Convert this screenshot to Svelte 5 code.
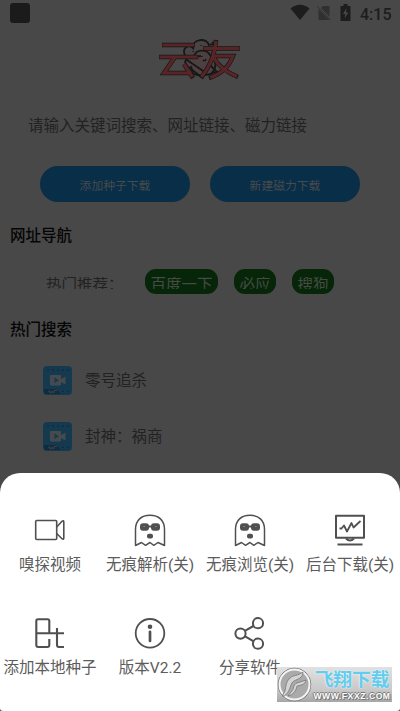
<script>
  const movies = ['零号追杀', '封神：祸商'];
  const sites = [
    { name: '百度一下', width: 73 },
    { name: '必应', width: 42 },
    { name: '搜狗', width: 42 }
  ];
  const actions = [
    { icon: 'video', label: '嗅探视频' },
    { icon: 'ghost', label: '无痕解析(关)' },
    { icon: 'ghost', label: '无痕浏览(关)' },
    { icon: 'monitor', label: '后台下载(关)' },
    { icon: 'bt', label: '添加本地种子' },
    { icon: 'info', label: '版本V2.2' },
    { icon: 'share', label: '分享软件' }
  ];
</script>

<div class="screen">
  <header class="status">
    <span class="square"></span>
    <div class="indicators">
      <svg width="20" height="17" viewBox="0 0 20 17"><path d="M0.5 4.5Q10-3 19.5 4.5L10 16Z" fill="#1d1d1d" /></svg>
      <svg class="sim" width="14" height="16" viewBox="0 0 14 16"><path d="M4 3L6 1H12.5V11.5Z M1.5 4L12.5 15H1.5Z" fill="#303030" /><path d="M0.5 1.5L13.5 15" stroke="#303030" stroke-width="1" /></svg>
      <svg class="battery" width="11" height="17" viewBox="0 0 11 17"><path d="M3.5 0H7.5V2H10.5V17H0.5V2H3.5Z" fill="#1d1d1d" /><path d="M6.5 4L3 10H5.3L4.6 14.5L8.3 8.5H6Z" fill="#484848" /></svg>
      <span class="clock">4:15</span>
    </div>
  </header>

  <div class="brand">
    <svg width="84" height="44" viewBox="0 0 84 44" fill="none" stroke-linecap="butt" stroke-linejoin="miter">
      <g stroke="#171717" stroke-width="1.8">
        <path fill="#484445" d="M28 20C22 11 31 7 35 11C34 2 49 0 51 8C57 6 60 10 55 17L44 25Z" />
        <path fill="#4c4041" d="M27 25C30 18 35 19 36 19C38 12 49 12 52 18C59 24 59 31 53 37L42 39L29 29Z" />
        <path d="M29 23L48 36M33 29L35 37L44 39M52 28L59 35L53 36M36 20L43 19M54 5L60 12" />
      </g>
      <g stroke="#191516" stroke-width="4.6">
        <path d="M4 8H37M1 20H40M17 20L6 36H33M26 27L35 41M45 11.5H82M58 3C56 21 51 30 43 41M54 19H75C71 30 63 37 51 41M56 21C61 30 68 35 80 40" />
      </g>
      <g stroke="#582527" stroke-width="3.2">
        <path d="M4.5 8H36.5M1.5 20H39.5M17 20L6 36H33M26 27L34.5 40M45.5 11.5H81.5M58 4C56 21 51 30 43.5 40M54 19H75C71 30 63 37 52 40.5M56 21C61 30 68 35 79 39.5" />
      </g>
      <path d="M35 14V15M43 8V9M44 19V20M45 23Q47 25 48 22" stroke="#111" stroke-width="1.3" />
    </svg>
  </div>

  <p class="hint">请输入关键词搜索、网址链接、磁力链接</p>
  <div class="buttons">
    <div class="button"><span>添加种子下载</span></div>
    <div class="button"><span>新建磁力下载</span></div>
  </div>
  <h2>网址导航</h2>
  <div class="sites">
    <span class="lead">热门推荐：</span>
    {#each sites as site}
      <div class="site" style:width="{site.width}px"><span>{site.name}</span></div>
    {/each}
  </div>
  <h2 class="hot">热门搜索</h2>
  <div class="movies">
    {#each movies as title}
      <div class="movie">
        <svg width="29" height="29" viewBox="0 0 29 29">
          <rect width="29" height="29" rx="4" fill="#153a50" />
          <path d="M4 4H26M4 25.5H26" stroke="#102d40" stroke-width="1.6" stroke-dasharray="2 3" />
          <path d="M1 23H13L18 28H4Q1 28 1 25Z" fill="#102b3b" />
          <path d="M5 26L7 24.5V27H9V25L11 27V24.5H14" stroke="#38424a" fill="none" />
          <path d="M8 9H17Q18 9 18 10V13L22.5 10.5V18.5L18 16V18.5Q18 19.5 17 19.5H8Q7 19.5 7 18.5V10Q7 9 8 9Z" fill="#474a4c" />
          <path d="M11.5 11.5L16 14.2L11.5 17Z" fill="#153a50" />
        </svg>
        <span>{title}</span>
      </div>
    {/each}
  </div>

  <section class="sheet">
    <div class="actions">
      {#each actions as action}
        <div class="action">
          <svg width="34" height="34" viewBox="0 0 34 34" fill="none" stroke="#505050" stroke-width="1.6" stroke-linejoin="round">
            {#if action.icon === 'video'}
              <rect x="2.7" y="7.5" width="21" height="19" rx="1" />
              <path d="M23.7 14L29 8.3Q30.8 7 30.8 9V25Q30.8 27 29 25.7L23.7 20.5" />
            {:else if action.icon === 'ghost'}
              <path d="M2.5 32.5V16.5C2.5 7 8.5 2.3 17 2.3S31.5 7 31.5 16.5V32.5L25 29.5L20.8 32.3L17 29.5L12.5 32.3L8.5 29.5Z" stroke-width="1.5" />
              <rect x="7" y="10.3" width="9" height="7.4" rx="3" fill="#505050" stroke="none" />
              <rect x="18" y="10.3" width="9" height="7.4" rx="3" fill="#505050" stroke="none" />
              <path d="M14 13.5H20" stroke-width="2" />
              <path d="M10.5 13.5H12M22 13.5H23.5" stroke="#858585" stroke-width="1.2" />
              <rect x="14" y="20.7" width="6" height="4.7" rx="2" fill="#505050" stroke="none" />
            {:else if action.icon === 'monitor'}
              <rect x="3" y="2.8" width="28" height="22" stroke-width="2" />
              <path d="M6.5 15.5H8.5L11 12.5L14 18.5L18.5 10L20.5 14.5L27.5 8" stroke-width="1.8" />
              <path d="M13 25.5Q17 29.5 21 25.5M4.5 31.5H29.5" stroke-width="2" />
            {:else if action.icon === 'bt'}
              <path d="M3.3 17.3V5Q3.3 3.2 5 3.2H14.5Q16.3 3.2 16.3 5V17M3.3 17.3V29Q3.3 31 5.3 31H14.3Q16.3 31 16.3 29V23M3.3 17.3H31M24 12V29Q24 31 26 31H31" stroke-width="2.1" />
            {:else if action.icon === 'info'}
              <circle cx="17" cy="17.3" r="14.3" stroke-width="1.8" />
              <circle cx="17" cy="10.8" r="2.3" fill="#505050" stroke="none" />
              <path d="M17 15.8V25" stroke-width="2.7" stroke-linecap="round" />
            {:else}
              <path d="M12.3 14.7L20.5 10M12.1 20.3L20.7 25.3" stroke-width="2.1" />
              <circle cx="7.5" cy="17.6" r="5.1" stroke-width="2" />
              <circle cx="25" cy="7.2" r="5.1" stroke-width="2" />
              <circle cx="25" cy="27.7" r="5.1" stroke-width="2" />
            {/if}
          </svg>
          <span>{action.label}</span>
        </div>
      {/each}
    </div>
  </section>

  <div class="watermark">
    <svg width="35" height="35" viewBox="0 0 35 35">
      <circle cx="17.5" cy="17.5" r="16.3" fill="#999" stroke="#6d6d6d" />
      <circle cx="17.5" cy="17.5" r="15" fill="#aaa" stroke="#f5f5f5" stroke-width="2" />
      <path d="M6 27C10 24 7 16 13 11C16 8 21 9 26 5C26 11 21 12 17 14C12 17 15 24 6 30ZM14 25C18 22 15 18 20 16L29 13C28 18 24 18 20 19C19 24 16 28 11 29Z" fill="#d4d4d4" stroke="#777" stroke-width=".8" />
    </svg>
    <div class="wm-copy"><b>飞翔下载</b><strong>WWW.FXXZ.COM</strong></div>
  </div>
</div>

<style>
  :global(body) { background: #484848; }
  .screen {
    position: relative;
    display: flex;
    flex-direction: column;
    width: 400px;
    height: 711px;
    overflow: hidden;
    background: #484848;
    color: #202020;
    font-family: Roboto, "Noto Sans CJK SC", sans-serif;
    box-sizing: border-box;
  }
  .status { height: 28px; display: flex; justify-content: space-between; padding: 0 9px 0 10px; flex: none; }
  .square { width: 20px; height: 20px; margin-top: 3px; border-radius: 3px; background: #1b1b1b; }
  .indicators { display: flex; align-items: flex-start; padding-top: 4px; }
  .sim { margin: 1px 0 0 7px; }
  .battery { margin-left: 9px; }
  .clock { width: 31px; margin-left: 9px; font-size: 16px; line-height: 21px; font-weight: 500; color: #1d1d1d; }
  .brand { height: 44px; display: flex; justify-content: center; margin-top: 9px; flex: none; }
  .hint { margin: 33px 0 0 28px; height: 24px; font-size: 15.5px; line-height: 24px; white-space: nowrap; color: #222; flex: none; }
  .buttons { display: flex; gap: 20px; margin: 28px 0 0 40px; flex: none; }
  .button { width: 150px; height: 36px; border-radius: 18px; background: #092e47; color: #474b4e; text-align: center; }
  .button span { display: block; overflow: hidden; height: 12px; margin-top: 12.5px; font-size: 11.8px; line-height: 14px; }
  h2 { margin: 21px 0 0 10px; height: 26px; font-size: 15.5px; line-height: 26px; font-weight: 500; color: #050505; flex: none; }
  .sites { display: flex; height: 25px; margin: 20px 0 0 46px; flex: none; }
  .lead { width: 83px; margin: 7.5px 16px 0 0; height: 12.5px; overflow: hidden; font-size: 15.5px; line-height: 16px; white-space: nowrap; color: #222; }
  .site { height: 25px; border-radius: 11px; background: #072508; color: #444c44; margin-right: 16px; text-align: center; }
  .site span { display: block; height: 12.5px; margin-top: 7.5px; overflow: hidden; font-size: 15.5px; line-height: 16px; white-space: nowrap; }
  .hot { margin-top: 23px; }
  .movies { display: flex; flex-direction: column; gap: 27px; margin: 23px 0 0 43px; flex: none; }
  .movie { display: flex; height: 29px; align-items: center; gap: 13px; font-size: 15.5px; line-height: 24px; color: #222; }
  .sheet { position: absolute; left: 0; right: 0; bottom: 0; height: 238px; border-radius: 20px 20px 3px 3px; background: #fff; }
  .actions { display: grid; grid-template-columns: repeat(4, 100px); grid-auto-rows: 103px; padding-top: 40px; }
  .action { display: flex; flex-direction: column; align-items: center; font-size: 15.5px; line-height: 24px; color: #5c5c5c; white-space: nowrap; }
  .action span { margin-top: 6px; }
  .watermark { position: absolute; left: 277px; top: 667px; width: 115px; height: 35px; display: flex; background: linear-gradient(#e1e1e1, #c9c9c9 65%, #a5a5a5); }
  .wm-copy { display: flex; flex-direction: column; align-items: center; width: 80px; }
  b { margin-top: 2px; font-size: 18.7px; line-height: 22px; font-weight: 700; color: #62cdef; white-space: nowrap; text-shadow: 0 0 2px #fff; }
  strong { font-family: "Liberation Sans", sans-serif; font-size: 8.5px; line-height: 10px; letter-spacing: .6px; font-weight: 700; color: #fff; text-shadow: 1px 1px #777, -1px 0 #777, 0 -1px #777; white-space: nowrap; }
</style>
